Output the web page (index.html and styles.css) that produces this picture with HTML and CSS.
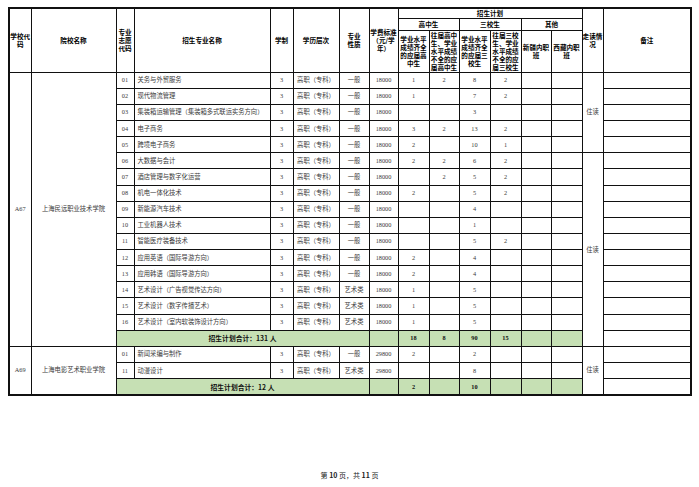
FILE: index.html
```html
<!DOCTYPE html>
<html lang="zh-CN">
<head>
<meta charset="utf-8">
<title>招生计划</title>
<link rel="stylesheet" href="styles.css">
</head>
<body>
<table class="plan">
  <colgroup>
    <col class="c-code"><col class="c-school"><col class="c-mcode"><col class="c-major"><col class="c-len"><col class="c-level"><col class="c-kind"><col class="c-fee">
    <col class="c-n1"><col class="c-n2"><col class="c-n3"><col class="c-n4"><col class="c-n5"><col class="c-n6">
    <col class="c-stay"><col class="c-note">
  </colgroup>
  <thead>
    <tr class="h1">
      <th rowspan="3">学校代<br>码</th>
      <th rowspan="3">院校名称</th>
      <th rowspan="3">专业<br>志愿<br>代码</th>
      <th rowspan="3">招生专业名称</th>
      <th rowspan="3">学制</th>
      <th rowspan="3">学历层次</th>
      <th rowspan="3">专业<br>性质</th>
      <th rowspan="3">学费标准<br>（元/学<br>年）</th>
      <th colspan="6">招生计划</th>
      <th rowspan="3">走读情<br>况</th>
      <th rowspan="3">备注</th>
    </tr>
    <tr class="h2">
      <th colspan="2">高中生</th>
      <th colspan="2">三校生</th>
      <th colspan="2">其他</th>
    </tr>
    <tr class="h3">
      <th>学业水平<br>成绩齐全<br>的应届高<br>中生</th>
      <th>往届高中<br>生、学业<br>水平成绩<br>不全的应<br>届高中生</th>
      <th>学业水平<br>成绩齐全<br>的应届三<br>校生</th>
      <th>往届三校<br>生、学业<br>水平成绩<br>不全的应<br>届三校生</th>
      <th>新疆内职<br>班</th>
      <th>西藏内职<br>班</th>
    </tr>
  </thead>
  <tbody>
    <tr class="r">
      <td rowspan="17">A67</td>
      <td rowspan="17" class="school">上海民远职业技术学院</td>
      <td>01</td><td class="major">关务与外贸服务</td><td>3</td><td>高职（专科）</td><td>一般</td><td>18000</td>
      <td>1</td><td>2</td><td>8</td><td>2</td><td></td><td></td>
      <td rowspan="5">住读</td><td></td>
    </tr>
    <tr class="r"><td>02</td><td class="major">现代物流管理</td><td>3</td><td>高职（专科）</td><td>一般</td><td>18000</td><td>1</td><td></td><td>7</td><td>2</td><td></td><td></td><td></td></tr>
    <tr class="r"><td>03</td><td class="major">集装箱运输管理（集装箱多式联运实务方向）</td><td>3</td><td>高职（专科）</td><td>一般</td><td>18000</td><td></td><td></td><td>3</td><td></td><td></td><td></td><td></td></tr>
    <tr class="r"><td>04</td><td class="major">电子商务</td><td>3</td><td>高职（专科）</td><td>一般</td><td>18000</td><td>3</td><td>2</td><td>13</td><td>2</td><td></td><td></td><td></td></tr>
    <tr class="r"><td>05</td><td class="major">跨境电子商务</td><td>3</td><td>高职（专科）</td><td>一般</td><td>18000</td><td>2</td><td></td><td>10</td><td>1</td><td></td><td></td><td></td></tr>
    <tr class="r"><td>06</td><td class="major">大数据与会计</td><td>3</td><td>高职（专科）</td><td>一般</td><td>18000</td><td>2</td><td>2</td><td>6</td><td>2</td><td></td><td></td><td rowspan="12">住读</td><td></td></tr>
    <tr class="r"><td>07</td><td class="major">酒店管理与数字化运营</td><td>3</td><td>高职（专科）</td><td>一般</td><td>18000</td><td></td><td>2</td><td>5</td><td>2</td><td></td><td></td><td></td></tr>
    <tr class="r"><td>08</td><td class="major">机电一体化技术</td><td>3</td><td>高职（专科）</td><td>一般</td><td>18000</td><td>2</td><td></td><td>5</td><td>2</td><td></td><td></td><td></td></tr>
    <tr class="r"><td>09</td><td class="major">新能源汽车技术</td><td>3</td><td>高职（专科）</td><td>一般</td><td>18000</td><td></td><td></td><td>4</td><td></td><td></td><td></td><td></td></tr>
    <tr class="r"><td>10</td><td class="major">工业机器人技术</td><td>3</td><td>高职（专科）</td><td>一般</td><td>18000</td><td></td><td></td><td>1</td><td></td><td></td><td></td><td></td></tr>
    <tr class="r"><td>11</td><td class="major">智能医疗装备技术</td><td>3</td><td>高职（专科）</td><td>一般</td><td>18000</td><td></td><td></td><td>5</td><td>2</td><td></td><td></td><td></td></tr>
    <tr class="r"><td>12</td><td class="major">应用英语（国际导游方向）</td><td>3</td><td>高职（专科）</td><td>一般</td><td>18000</td><td>2</td><td></td><td>4</td><td></td><td></td><td></td><td></td></tr>
    <tr class="r"><td>13</td><td class="major">应用韩语（国际导游方向）</td><td>3</td><td>高职（专科）</td><td>一般</td><td>18000</td><td>2</td><td></td><td>4</td><td></td><td></td><td></td><td></td></tr>
    <tr class="r"><td>14</td><td class="major">艺术设计（广告视觉传达方向）</td><td>3</td><td>高职（专科）</td><td>艺术类</td><td>18000</td><td>1</td><td></td><td>5</td><td></td><td></td><td></td><td></td></tr>
    <tr class="r"><td>15</td><td class="major">艺术设计（数字传播艺术）</td><td>3</td><td>高职（专科）</td><td>艺术类</td><td>18000</td><td>1</td><td></td><td>5</td><td></td><td></td><td></td><td></td></tr>
    <tr class="r"><td>16</td><td class="major">艺术设计（室内软装饰设计方向）</td><td>3</td><td>高职（专科）</td><td>艺术类</td><td>18000</td><td>1</td><td></td><td>5</td><td></td><td></td><td></td><td></td></tr>
    <tr class="r total">
      <td colspan="5" class="g sum">招生计划合计：131 人</td>
      <td class="g"></td><td class="g b">18</td><td class="g b">8</td><td class="g b">90</td><td class="g b">15</td><td class="g"></td><td class="g"></td>
      <td></td>
    </tr>
    <tr class="r">
      <td rowspan="3">A69</td>
      <td rowspan="3" class="school">上海电影艺术职业学院</td>
      <td>01</td><td class="major">新闻采编与制作</td><td>3</td><td>高职（专科）</td><td>一般</td><td>29800</td>
      <td>2</td><td></td><td>2</td><td></td><td></td><td></td>
      <td rowspan="3">住读</td><td></td>
    </tr>
    <tr class="r"><td>11</td><td class="major">动漫设计</td><td>3</td><td>高职（专科）</td><td>艺术类</td><td>29800</td><td></td><td></td><td>8</td><td></td><td></td><td></td><td></td></tr>
    <tr class="r total">
      <td colspan="5" class="g sum">招生计划合计：12 人</td>
      <td class="g"></td><td class="g b">2</td><td class="g"></td><td class="g b">10</td><td class="g"></td><td class="g"></td><td class="g"></td>
      <td></td>
    </tr>
  </tbody>
</table>
<div class="footer">第 <b>10</b> 页，共 <b>11</b> 页</div>
</body>
</html>
```
FILE: styles.css
```css
html, body {
  background: #fff;
}
body {
  margin: 0;
  padding: 7px 8px 0 8px;
  font-family: "Noto Sans CJK SC", sans-serif;
  color: #000;
}
.plan {
  border-collapse: collapse;
  table-layout: fixed;
  width: 683px;
  border: 2px solid #111;
}
.plan th,
.plan td {
  border: 1px solid #111;
  padding: 0;
  text-align: center;
  vertical-align: middle;
  white-space: nowrap;
}
.plan th {
  font-size: 6.6px;
  line-height: 8.2px;
  font-weight: bold;
  font-family: "Noto Sans CJK SC", sans-serif;
}
.plan td {
  font-size: 6.3px;
  line-height: 8px;
  font-family: "Liberation Serif", "Noto Sans CJK SC", serif;
  color: #3a3a3a;
}
.c-code { width: 22px; }
.c-school { width: 85px; }
.c-mcode { width: 18px; }
.c-major { width: 136px; }
.c-len { width: 23px; }
.c-level { width: 46px; }
.c-kind { width: 30px; }
.c-fee { width: 29px; }
.c-n1 { width: 31px; }
.c-n2 { width: 30px; }
.c-n3 { width: 31px; }
.c-n4 { width: 31px; }
.c-n5 { width: 30px; }
.c-n6 { width: 31px; }
.c-stay { width: 21px; }
.c-note { width: 88px; }

.h1 { height: 10px; }
.h2 { height: 12px; }
.h3 { height: 42px; }
.r { height: 16.15px; }

.plan td.major {
  text-align: left;
  padding-left: 3px;
}
.plan td.g {
  background: #c6e0b4;
}
.plan td.b,
.plan td.sum {
  font-weight: bold;
  color: #111;
}
.plan td.sum {
  font-family: "Noto Sans CJK SC", sans-serif;
  font-size: 6.8px;
}
.footer {
  margin-top: 74px;
  text-align: center;
  font-size: 7px;
  line-height: 10px;
  color: #222;
}
```
